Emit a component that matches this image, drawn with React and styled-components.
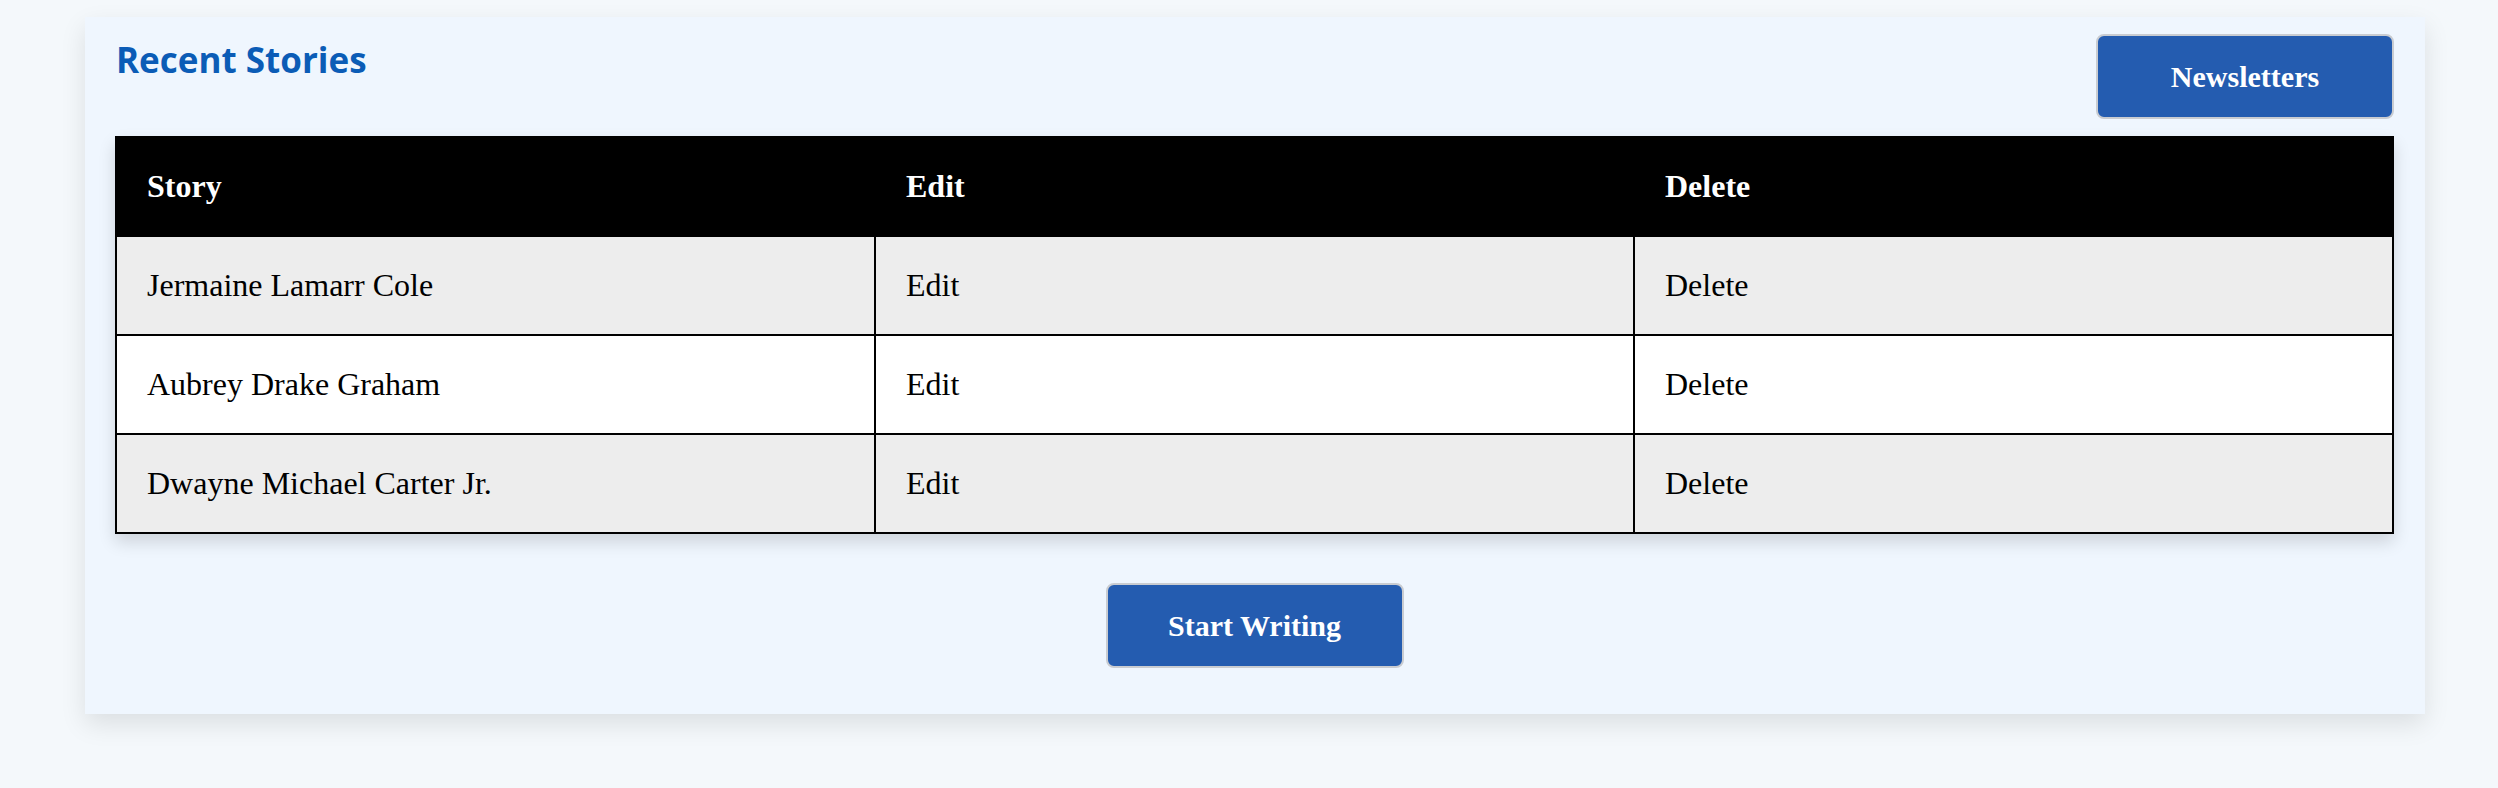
import React from 'react'
import styled, { createGlobalStyle } from 'styled-components'

const GlobalStyle = createGlobalStyle`
  html, body {
    margin: 0;
    padding: 0;
    background: #f4f8fb;
    font-family: "Liberation Serif", "Times New Roman", serif;
  }
`

const Page = styled.div`
  padding: 17px 0 40px 85px;
`

const Card = styled.section`
  box-sizing: border-box;
  width: 2340px;
  padding: 17px 31px 46px 30px;
  background: #eff6fe;
  box-shadow: 0 10px 24px rgba(0, 0, 0, 0.1);
`

const HeaderRow = styled.div`
  display: flex;
  justify-content: space-between;
  align-items: flex-start;
`

const Title = styled.h3`
  margin: 2px 0 0 1px;
  font-family: "Open Sans", Lato, sans-serif;
  font-weight: 700;
  font-size: 35px;
  color: #0b5cb6;
`

const Button = styled.button`
  box-sizing: border-box;
  width: 298px;
  height: 85px;
  border: 2px solid #c9ccd1;
  border-radius: 8px;
  background: #245cb0;
  color: #fff;
  font-family: "Liberation Serif", "Times New Roman", serif;
  font-weight: 700;
  font-size: 30px;
  cursor: pointer;
`

const Table = styled.table`
  width: 100%;
  margin-top: 17px;
  table-layout: fixed;
  border-collapse: collapse;
  box-shadow: 0 8px 16px rgba(0, 0, 0, 0.14);
`

const Th = styled.th`
  padding: 30px;
  border: 2px solid #000;
  background: #000;
  color: #fff;
  text-align: left;
  font-size: 32px;
  font-weight: 700;
`

const Tr = styled.tr`
  background: ${(props) => (props.shaded ? '#ededed' : '#fff')};
`

const Td = styled.td`
  padding: 30px;
  border: 2px solid #000;
  color: #000;
  font-size: 32px;
`

const Footer = styled.div`
  display: flex;
  justify-content: center;
  margin-top: 49px;
`

const stories = [
  'Jermaine Lamarr Cole',
  'Aubrey Drake Graham',
  'Dwayne Michael Carter Jr.',
]

export default function App() {
  return (
    <React.Fragment>
      <GlobalStyle />
      <Page>
        <Card>
          <HeaderRow>
            <Title>Recent Stories</Title>
            <Button>Newsletters</Button>
          </HeaderRow>
          <Table>
            <thead>
              <tr>
                <Th>Story</Th>
                <Th>Edit</Th>
                <Th>Delete</Th>
              </tr>
            </thead>
            <tbody>
              {stories.map((name, i) => (
                <Tr key={name} shaded={i % 2 === 0}>
                  <Td>{name}</Td>
                  <Td>Edit</Td>
                  <Td>Delete</Td>
                </Tr>
              ))}
            </tbody>
          </Table>
          <Footer>
            <Button>Start Writing</Button>
          </Footer>
        </Card>
      </Page>
    </React.Fragment>
  )
}
